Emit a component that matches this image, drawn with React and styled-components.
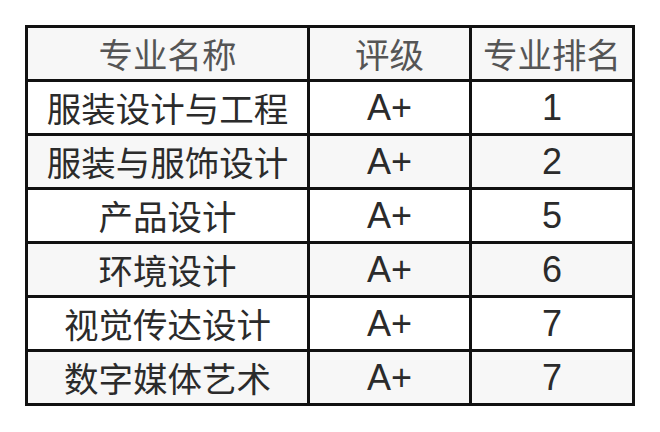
import styled, { createGlobalStyle } from "styled-components"

const GlobalStyle = createGlobalStyle`
  html, body {
    margin: 0;
    padding: 0;
    background: #ffffff;
  }
`

const rows = [
  ["服装设计与工程", "A+", "1"],
  ["服装与服饰设计", "A+", "2"],
  ["产品设计", "A+", "5"],
  ["环境设计", "A+", "6"],
  ["视觉传达设计", "A+", "7"],
  ["数字媒体艺术", "A+", "7"],
]

const Page = styled.div`
  padding: 25px;
  width: 660px;
  height: 432px;
  box-sizing: border-box;
`

const Grid = styled.div`
  display: grid;
  grid-template-columns: 279px 159px 160px;
  grid-auto-rows: 51px;
  gap: 3px;
  padding: 3px;
  width: 610px;
  box-sizing: border-box;
  background: #111111;
`

const Cell = styled.div`
  display: flex;
  align-items: center;
  justify-content: center;
  background: ${(p) => (p.$shade ? "#f7f7f7" : "#ffffff")};
  color: ${(p) => (p.$head ? "#555555" : "#2b2b2b")};
  font-family: ${(p) =>
    p.$latin
      ? `"Liberation Sans", Arial, "Noto Sans CJK SC", sans-serif`
      : `"Noto Sans CJK SC", sans-serif`};
  font-size: ${(p) => (p.$latin ? "36px" : "34.5px")};
  line-height: 1;
  white-space: nowrap;
`

export default function App() {
  return (
    <Page>
      <GlobalStyle />
      <Grid>
        <Cell $head $shade>专业名称</Cell>
        <Cell $head $shade>评级</Cell>
        <Cell $head $shade>专业排名</Cell>
        {rows.map((r, i) => {
          const shade = i % 2 === 1
          return [
            <Cell key={`${i}-n`} $shade={shade}>{r[0]}</Cell>,
            <Cell key={`${i}-g`} $shade={shade} $latin>{r[1]}</Cell>,
            <Cell key={`${i}-r`} $shade={shade} $latin>{r[2]}</Cell>,
          ]
        })}
      </Grid>
    </Page>
  )
}
